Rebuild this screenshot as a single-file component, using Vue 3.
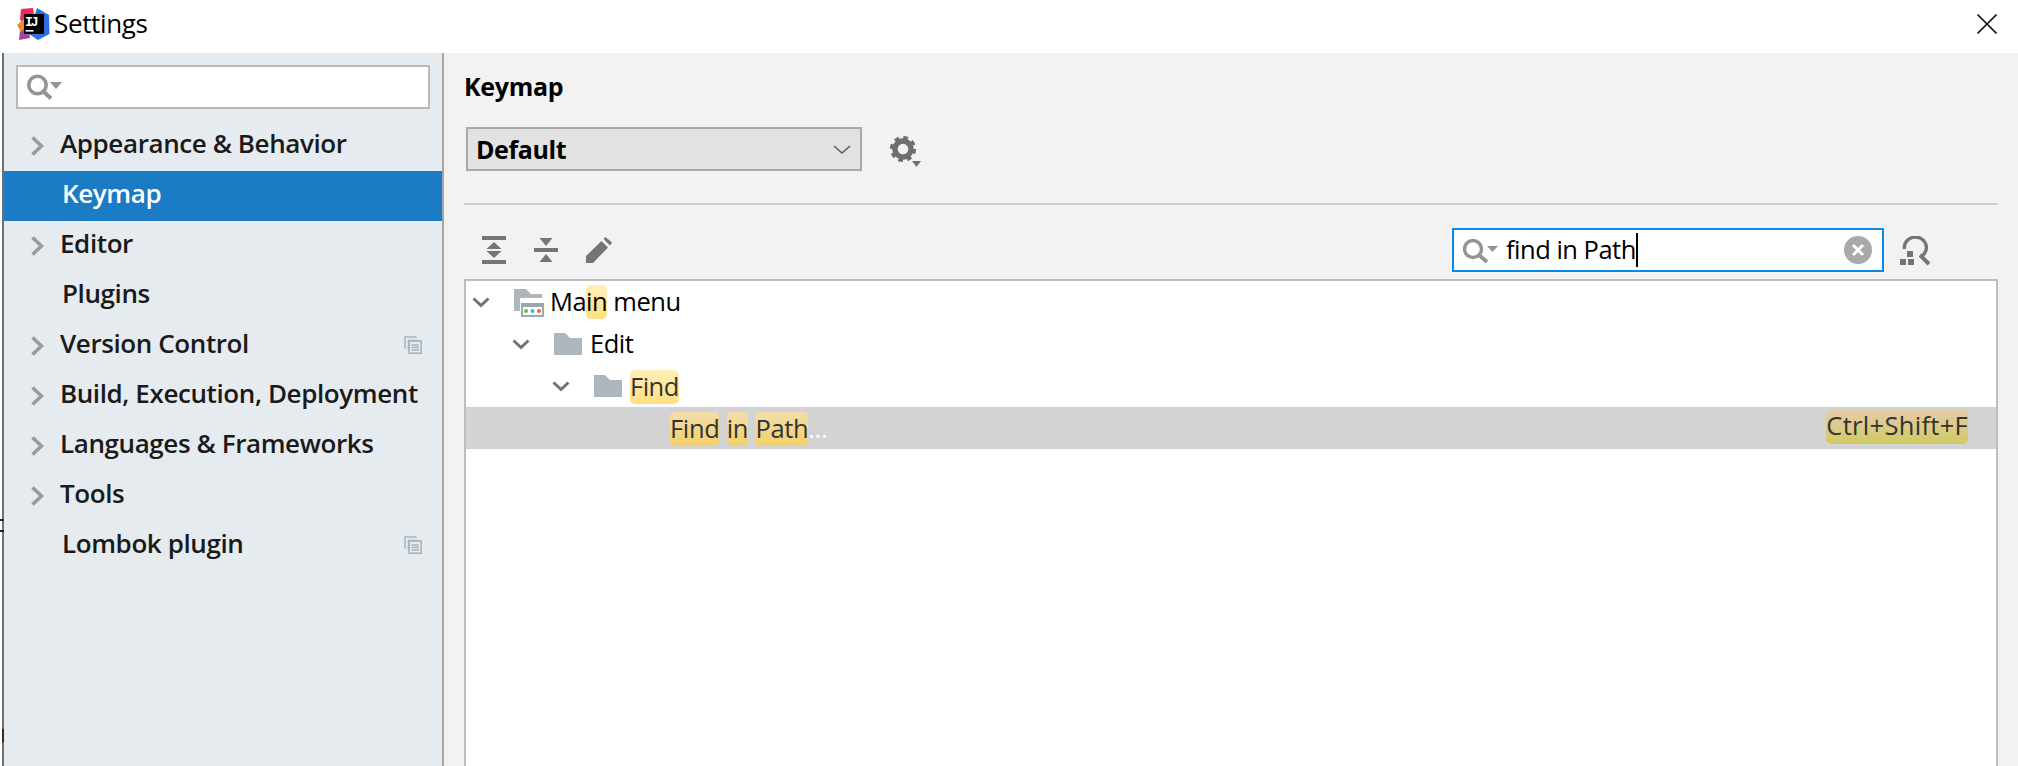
<script setup>
const nav = [
  { label: 'Appearance & Behavior', arrow: true },
  { label: 'Keymap', selected: true },
  { label: 'Editor', arrow: true },
  { label: 'Plugins' },
  { label: 'Version Control', arrow: true, copy: true },
  { label: 'Build, Execution, Deployment', arrow: true },
  { label: 'Languages & Frameworks', arrow: true },
  { label: 'Tools', arrow: true },
  { label: 'Lombok plugin', copy: true },
]
</script>

<template>
  <div class="window">
    <header class="titlebar">
      <svg class="logo" width="33" height="33" viewBox="0 0 33 33">
        <path d="M4 1 L16 0 L18 14 L3 12 Z" fill="#f0265f" />
        <path d="M20 0 L32 7 L32.5 26 L21 32 L12 26 Z" fill="#2f6fe0" />
        <path d="M4 12 L11 14 L13 30 L2 32 Z" fill="#a2489c" />
        <path d="M0 17 L7 11 L8 20 L4 24 Z" fill="#f08a2c" />
        <rect x="7" y="6" width="20" height="20" fill="#000" />
        <text x="8" y="18" class="logo-text">IJ</text>
        <rect x="8.5" y="22" width="8" height="1.6" fill="#fff" />
      </svg>
      <span class="title">Settings</span>
      <svg class="close" width="20" height="20" viewBox="0 0 20 20">
        <path d="M0.5 0.5 L19.5 19.5 M19.5 0.5 L0.5 19.5" stroke="#1a1a1a" stroke-width="1.6" fill="none" />
      </svg>
    </header>

    <div class="body">
      <aside class="sidebar">
        <div class="side-search">
          <svg width="36" height="26" viewBox="0 0 36 26">
            <circle cx="10.5" cy="11" r="8.7" fill="none" stroke="#949494" stroke-width="3.6" />
            <path d="M15 16 L24 24.5" stroke="#949494" stroke-width="4" />
            <path d="M23 8 H35 L29 15 Z" fill="#949494" />
          </svg>
        </div>
        <ul class="nav">
          <li v-for="item in nav" :key="item.label" class="nav-row" :class="{ selected: item.selected, parent: item.arrow }">
            <svg v-if="item.arrow" class="nav-arrow" width="13" height="20" viewBox="0 0 13 20">
              <path d="M1.5 1.5 L10.5 10 L1.5 18.5" fill="none" stroke="#9a9a9a" stroke-width="3.6" />
            </svg>
            <span class="nav-label">{{ item.label }}</span>
            <svg v-if="item.copy" class="nav-copy" width="18" height="18" viewBox="0 0 18 18">
              <path d="M12.5 1 H1 V12.5 M4.5 14 V4.5 H14" fill="none" stroke="#a8b4bd" stroke-width="1.6" />
              <rect x="5" y="5" width="12.2" height="12.2" fill="none" stroke="#a8b4bd" stroke-width="1.6" />
              <path d="M7.5 9 H15 M7.5 11.5 H15 M7.5 14 H15" stroke="#a8b4bd" stroke-width="1.3" />
            </svg>
          </li>
        </ul>
      </aside>

      <main class="main">
        <h1 class="heading">Keymap</h1>
        <div class="scheme">
          <div class="dropdown">
            <span>Default</span>
            <svg width="18" height="9" viewBox="0 0 18 9">
              <path d="M1 1 L9 8 L17 1" fill="none" stroke="#5f5f5f" stroke-width="1.6" />
            </svg>
          </div>
          <svg class="gear" width="36" height="36" viewBox="0 0 36 36">
            <circle cx="16" cy="18" r="8" fill="none" stroke="#6e6e6e" stroke-width="5.4" />
            <circle cx="16" cy="18" r="11.4" fill="none" stroke="#6e6e6e" stroke-width="3.4" stroke-dasharray="4.6 4.35" />
            <path d="M25 30 H34 L29.5 36 Z" fill="#6e6e6e" />
          </svg>
        </div>
        <hr class="rule" />
        <div class="toolbar">
          <svg width="24" height="28" viewBox="0 0 24 28" class="tool">
            <path d="M0 2 H24 M0 26 H24" stroke="#757575" stroke-width="4" />
            <path d="M12 6 L19.5 13 H4.5 Z M12 22 L19.5 15 H4.5 Z" fill="#757575" />
          </svg>
          <svg width="24" height="28" viewBox="0 0 24 28" class="tool">
            <path d="M0 14 H24" stroke="#757575" stroke-width="4" />
            <path d="M5.5 2 H18.5 L12 10 Z M12 18 L18.5 26 H5.5 Z" fill="#757575" />
          </svg>
          <svg width="26" height="26" viewBox="0 0 26 26" class="tool pencil">
            <path d="M0 26 V19 L15.5 4 L22 10.5 L7 26 Z M17.5 2 L19.5 0 L26 5.5 L24 8.5 Z" fill="#757575" />
          </svg>
          <div class="filter">
            <svg width="36" height="28" viewBox="0 0 36 28">
              <circle cx="10" cy="13" r="8.5" fill="none" stroke="#949494" stroke-width="3.4" />
              <path d="M15 18 L24 26" stroke="#949494" stroke-width="3.8" />
              <path d="M24 10 H35 L29.5 16 Z" fill="#949494" />
            </svg>
            <span class="filter-text">find in Path</span><span class="caret"></span>
            <svg class="clear" width="28" height="28" viewBox="0 0 28 28">
              <circle cx="14" cy="14" r="14" fill="#a9a9a9" />
              <path d="M9 9 L19 19 M19 9 L9 19" stroke="#fff" stroke-width="3" />
            </svg>
          </div>
          <svg class="shortcut" width="30" height="30" viewBox="0 0 30 30">
            <path d="M4.5 13 A11 10.5 0 1 1 21 20.5" fill="none" stroke="#757575" stroke-width="3.4" />
            <path d="M20 19 L29 28" stroke="#757575" stroke-width="4" />
            <rect x="7" y="15" width="6" height="6" fill="#757575" />
            <rect x="0" y="23" width="6" height="6" fill="#757575" />
            <rect x="8" y="23" width="6" height="6" fill="#757575" />
          </svg>
        </div>
        <section class="tree">
          <div class="tree-row depth-0">
            <svg class="twisty" width="18" height="11" viewBox="0 0 18 11">
              <path d="M1.5 1.5 L9 8.5 L16.5 1.5" fill="none" stroke="#737373" stroke-width="3" />
            </svg>
            <svg class="folder menu-folder" width="30" height="28" viewBox="0 0 30 28">
              <path d="M0 0 H12 L17 5 H28 V9 H6 V22 H0 Z" fill="#adb6bc" />
              <rect x="7" y="14" width="23" height="14" fill="#9da7ae" />
              <rect x="9" y="18" width="19" height="8" fill="#fff" />
              <circle cx="12" cy="22" r="2" fill="#6cbb45" />
              <circle cx="18.5" cy="22" r="2" fill="#3fb4e0" />
              <circle cx="25" cy="22" r="2" fill="#ef6a2c" />
            </svg>
            <span class="tree-text">Ma<mark class="hit">in</mark> menu</span>
          </div>
          <div class="tree-row depth-1">
            <svg class="twisty" width="18" height="11" viewBox="0 0 18 11">
              <path d="M1.5 1.5 L9 8.5 L16.5 1.5" fill="none" stroke="#737373" stroke-width="3" />
            </svg>
            <svg class="folder" width="28" height="22" viewBox="0 0 28 22">
              <path d="M0 0 H11 L16 5 H28 V22 H0 Z" fill="#adb6bc" />
            </svg>
            <span class="tree-text">Edit</span>
          </div>
          <div class="tree-row depth-2">
            <svg class="twisty" width="18" height="11" viewBox="0 0 18 11">
              <path d="M1.5 1.5 L9 8.5 L16.5 1.5" fill="none" stroke="#737373" stroke-width="3" />
            </svg>
            <svg class="folder" width="28" height="22" viewBox="0 0 28 22">
              <path d="M0 0 H11 L16 5 H28 V22 H0 Z" fill="#adb6bc" />
            </svg>
            <span class="tree-text"><mark class="hit find">Find</mark></span>
          </div>
          <div class="tree-row leaf">
            <span class="tree-text"><mark class="hit sel">Find</mark> <mark class="hit sel">in</mark> <mark class="hit sel">Path</mark><span class="dots">...</span></span>
            <mark class="hit key">Ctrl+Shift+F</mark>
          </div>
        </section>
      </main>
    </div>
    <span class="blip"></span>
    <span class="blip-bracket"></span>
  </div>
</template>

<style>
html, body { margin: 0; padding: 0; background: #fff; }
</style>

<style scoped>
.window {
  position: relative;
  width: 2018px;
  height: 766px;
  display: flex;
  flex-direction: column;
  overflow: hidden;
  background: #fff;
  font-family: "Open Sans", "Noto Sans", sans-serif;
  color: #000;
}
.titlebar {
  height: 53px;
  flex: none;
  display: flex;
  align-items: center;
  padding: 0 21px 0 17px;
  box-sizing: border-box;
}
.logo { margin-top: -4px; flex: none; }
.logo-text { font-family: "Liberation Mono", monospace; font-weight: 700; font-size: 13px; letter-spacing: -2px; fill: #fff; }
.title { margin-left: 4px; font-size: 26px; letter-spacing: -0.35px; color: #000; margin-top: -7px; }
.close { margin-left: auto; margin-top: -5px; }
.body {
  flex: 1;
  min-height: 0;
  display: flex;
  margin-left: 2px;
  border-left: 2px solid #6f6f6f;
}
.sidebar {
  width: 438px;
  flex: none;
  background: #e6ebef;
  border-right: 2px solid #a6a6a6;
  padding-top: 12px;
}
.side-search {
  margin-left: 12px;
  width: 414px;
  height: 44px;
  box-sizing: border-box;
  border: 2px solid #b9b9b9;
  background: #fff;
  display: flex;
  align-items: center;
  padding-left: 9px;
}
.nav { list-style: none; margin: 12px 0 0; padding: 0; }
.nav-row {
  height: 50px;
  display: flex;
  align-items: center;
  padding-left: 58px;
  font-size: 26px;
  font-weight: 600;
  color: #1a1a1a;
  letter-spacing: -0.4px;
}
.nav-row.parent { padding-left: 27px; }
.nav-arrow { margin-right: 16px; flex: none; }
.nav-row.selected { background: #1b7bc4; color: #fff; }
.nav-label { white-space: nowrap; margin-top: -7px; }
.nav-copy { margin-left: auto; margin-right: 20px; margin-top: -2px; flex: none; }
.main {
  flex: 1;
  min-width: 0;
  background: #f2f2f2;
  padding: 0 20px;
  display: flex;
  flex-direction: column;
}
.heading {
  margin: 18px 0 0 0;
  font-size: 25px;
  line-height: 30px;
  font-weight: 700;
  letter-spacing: -0.3px;
  padding-bottom: 1px;
}
.scheme {
  margin-top: 25px;
  display: flex;
  align-items: center;
  padding-left: 2px;
}
.dropdown {
  width: 396px;
  height: 44px;
  box-sizing: border-box;
  border: 2px solid #a9a9a9;
  background: #e2e2e2;
  display: flex;
  align-items: center;
  justify-content: space-between;
  padding: 0 9px 0 8px;
  font-size: 25px;
  font-weight: 700;
  letter-spacing: -0.4px;
}
.gear { margin-left: 25px; }
.rule {
  margin: 32px 0 0;
  border: none;
  height: 2px;
  background: #cfcfcf;
}
.toolbar {
  display: flex;
  align-items: center;
  margin-top: 22px;
  height: 46px;
  padding-left: 18px;
}
.tool { flex: none; margin-right: 28px; }
.filter {
  margin-left: auto;
  width: 432px;
  height: 44px;
  box-sizing: border-box;
  border: 2px solid #0a8ae6;
  background: #fff;
  display: flex;
  align-items: center;
  padding: 0 10px 0 9px;
  font-size: 25.5px;
  font-weight: 400;
}
.filter-text { margin-left: 7px; margin-top: -3px; letter-spacing: -0.5px; white-space: nowrap; }
.caret { width: 2px; height: 34px; background: #000; flex: none; }
.clear { margin-left: auto; }
.shortcut { margin-left: 16px; margin-right: 68px; margin-top: 2px; flex: none; }
.pencil { margin-right: 0; }
.tree {
  flex: 1;
  margin-top: 6px;
  background: #fff;
  border: 2px solid #bdbdbd;
  border-bottom: none;
  font-size: 25.5px;
}
.tree-row {
  height: 42px;
  display: flex;
  align-items: center;
  box-sizing: border-box;
}
.depth-0 { padding-left: 6px; }
.depth-1 { padding-left: 46px; }
.depth-2 { padding-left: 86px; }
.twisty { flex: none; }
.folder { flex: none; margin-left: 24px; }
.menu-folder { margin-top: 2px; }
.tree-text { margin-left: 6px; white-space: nowrap; letter-spacing: -0.5px; color: #000; margin-top: -2px; }
.depth-1 .tree-text { margin-left: 8px; }
.depth-2 .tree-text { margin-left: 8px; margin-top: 0; }
.hit {
  display: inline-block;
  height: 34px;
  line-height: 33px;
  border-radius: 5px;
  color: #333;
  background: linear-gradient(#fff0b8, #ffdf80);
}
.depth-0 .hit { color: #000; }
.leaf {
  background: #d3d3d3;
  padding: 0 28px 0 204px;
  justify-content: space-between;
}
.leaf .tree-text { margin-left: 0; margin-top: 0; word-spacing: 1px; letter-spacing: -0.35px; }
.sel { background: linear-gradient(#f3deaa, #f2d069); }
.key { background: linear-gradient(#e6cbaa, #cfcb63); letter-spacing: 0.3px; line-height: 31px; margin-top: -2px; }
.dots { color: #fff; }
.blip {
  position: absolute;
  left: 2px;
  top: 729px;
  width: 2px;
  height: 13px;
  background: #3b2a10;
}
.blip-bracket {
  position: absolute;
  left: 0;
  top: 519px;
  width: 4px;
  height: 13px;
  box-sizing: border-box;
  border-top: 2px solid #222;
  border-bottom: 2px solid #222;
}
</style>
